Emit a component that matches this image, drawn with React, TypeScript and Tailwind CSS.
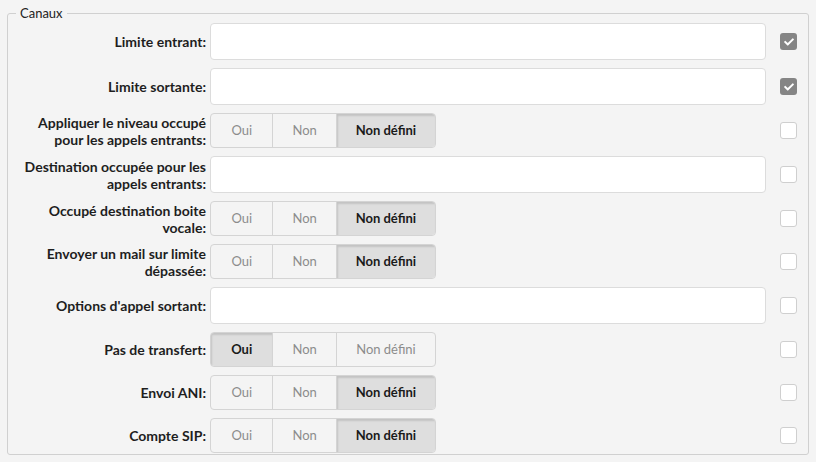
import React from "react";
import { FaCheck } from "react-icons/fa";

type Choice = "oui" | "non" | "nd";

interface Row {
  label: string[];
  kind: "input" | "toggle";
  value?: Choice;
  checked: boolean;
}

const rows: Row[] = [
  { label: ["Limite entrant:"], kind: "input", checked: true },
  { label: ["Limite sortante:"], kind: "input", checked: true },
  { label: ["Appliquer le niveau occupé", "pour les appels entrants:"], kind: "toggle", value: "nd", checked: false },
  { label: ["Destination occupée pour les", "appels entrants:"], kind: "input", checked: false },
  { label: ["Occupé destination boite", "vocale:"], kind: "toggle", value: "nd", checked: false },
  { label: ["Envoyer un mail sur limite", "dépassée:"], kind: "toggle", value: "nd", checked: false },
  { label: ["Options d'appel sortant:"], kind: "input", checked: false },
  { label: ["Pas de transfert:"], kind: "toggle", value: "oui", checked: false },
  { label: ["Envoi ANI:"], kind: "toggle", value: "nd", checked: false },
  { label: ["Compte SIP:"], kind: "toggle", value: "nd", checked: false },
];

const options: { key: Choice; text: string; width: string }[] = [
  { key: "oui", text: "Oui", width: "w-[62px]" },
  { key: "non", text: "Non", width: "w-[64px]" },
  { key: "nd", text: "Non défini", width: "w-[100px]" },
];

const Toggle: React.FC<{ value?: Choice }> = ({ value }) => (
  <div className="flex h-[35px] w-[226px] overflow-hidden rounded-[4px] border border-[#d4d4d4] bg-[#f4f4f4]">
    {options.map((opt, i) => {
      const active = opt.key === value;
      return (
        <div
          key={opt.key}
          className={`flex items-center justify-center ${opt.width} ${
            i > 0 ? "border-l border-[#d4d4d4]" : ""
          } ${
            active
              ? "bg-[#dedede] font-bold text-[#1a1a1a] shadow-[inset_1px_2px_2px_rgba(0,0,0,0.12)]"
              : "text-[#8c8c8c]"
          }`}
        >
          {opt.text}
        </div>
      );
    })}
  </div>
);

const Box: React.FC<{ checked: boolean }> = ({ checked }) =>
  checked ? (
    <div className="flex h-[17px] w-[17px] items-center justify-center rounded-[3px] bg-[#858585] text-white">
      <FaCheck size={10} />
    </div>
  ) : (
    <div className="h-[17px] w-[17px] rounded-[3px] border border-[#cfcfcf] bg-white" />
  );

const App: React.FC = () => {
  return (
    <div className="min-h-[462px] bg-[#f4f4f4] px-[7px] pt-[5px] font-['Lato','Liberation_Sans',sans-serif] text-[13px] text-[#1e1e1e]">
      <fieldset className="rounded-[3px] border border-[#d0d0d0] pb-[1px] pt-[2px]">
        <legend className="ml-[8px] px-[4px] leading-[16px] text-[#222]">Canaux</legend>
        <div className="grid grid-cols-[202px_556px_1fr] gap-y-2">
          {rows.map((row, i) => (
            <React.Fragment key={i}>
              <div className="flex flex-col items-end justify-center pr-[4px] text-right text-[14px] font-bold leading-[17px]">
                {row.label.map((line, j) => (
                  <span key={j} className="whitespace-nowrap">
                    {line}
                  </span>
                ))}
              </div>
              <div className="flex items-center">
                {row.kind === "input" ? (
                  <input
                    type="text"
                    className="h-[37px] w-full rounded-[4px] border border-[#dcdcdc] bg-white px-2 outline-none"
                  />
                ) : (
                  <Toggle value={row.value} />
                )}
              </div>
              <div className="flex items-center pl-[14px]">
                <Box checked={row.checked} />
              </div>
            </React.Fragment>
          ))}
        </div>
      </fieldset>
    </div>
  );
};

export default App;
